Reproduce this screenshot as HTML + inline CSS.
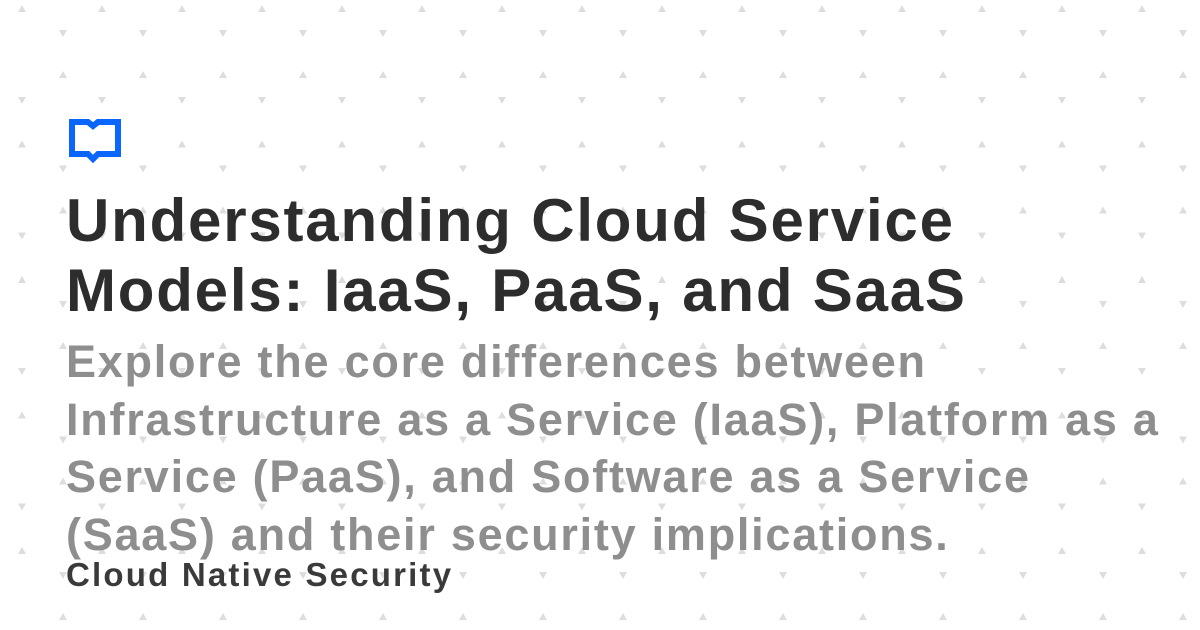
<!DOCTYPE html>
<html><head><meta charset="utf-8"><style>
html,body{margin:0;padding:0}
body{width:1200px;height:630px;position:relative;overflow:hidden;background:#fff;font-family:"Liberation Sans",sans-serif;font-weight:bold}
svg.bg{position:absolute;left:0;top:0}
.t{position:absolute;left:66px;top:186px;font-size:60px;line-height:70px;color:#2d2d2d;white-space:nowrap;letter-spacing:1.8px}
.s{position:absolute;left:66px;top:333px;font-size:45px;line-height:57.5px;color:#8e8e8e;white-space:nowrap;letter-spacing:1.75px}
.f{position:absolute;left:66px;top:557px;font-size:33px;line-height:36px;color:#3a3a3a;white-space:nowrap;letter-spacing:2.2px}
</style></head><body>
<svg class="bg" width="1200" height="630">
<defs><pattern id="p" x="2" y="0" width="80" height="135.5" patternUnits="userSpaceOnUse">
<path d="M20 5 L24 12 L16 12Z M20 104 L24 97 L16 97Z M61 37 L65 30 L57 30Z M61 71 L65 78 L57 78Z" fill="#dcdde0"/>
</pattern></defs>
<rect width="1200" height="630" fill="url(#p)"/>
<path d="M72 122 H88 L93 126 L98 122 H118 V154 H98 L93 159 L88 154 H72Z" fill="#fff" stroke="#0a66ff" stroke-width="6" stroke-linejoin="miter"/>
</svg>
<div class="t">Understanding Cloud Service<br>Models: IaaS, PaaS, and SaaS</div>
<div class="s">Explore the core differences between<br>Infrastructure as a Service (IaaS), Platform as a<br>Service (PaaS), and Software as a Service<br>(SaaS) and their security implications.</div>
<div class="f">Cloud Native Security</div>
</body></html>
